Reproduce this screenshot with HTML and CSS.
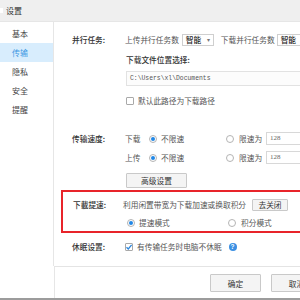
FILE: index.html
```html
<!DOCTYPE html>
<html lang="zh-CN">

<head>
    <meta charset="UTF-8">
    <meta name="viewport" content="width=device-width, initial-scale=1.0">
    <title>设置</title>
    <link rel="stylesheet" href="styles.css">
</head>

<body>
    <div class="window">
        <!-- Title bar -->
        <div class="titlebar"><span class="app-icon"></span>设置</div>

        <div class="main">
            <!-- Sidebar -->
            <ul class="sidebar">
                <li>基本</li>
                <li class="active">传输</li>
                <li>隐私</li>
                <li>安全</li>
                <li>提醒</li>
            </ul>

            <!-- Settings panel -->
            <div class="panel">
                <div class="row row-tasks">
                    <span class="label">并行任务:</span>
                    <span class="text">上传并行任务数</span>
                    <span class="select">智能<i>▾</i></span>
                    <span class="text text-down">下载并行任务数</span>
                    <span class="select select-down">智能<i>▾</i></span>
                </div>

                <div class="row indent row-path-title">
                    <span class="label-strong">下载文件位置选择:</span>
                </div>
                <div class="indent path-input">C:\Users\xl\Documents</div>
                <div class="row indent row-default">
                    <span class="checkbox"></span>
                    <span class="text">默认此路径为下载路径</span>
                </div>

                <div class="row row-speed">
                    <span class="label">传输速度:</span>
                    <span class="text dir">下载</span>
                    <span class="opt"><span class="radio on"></span><span class="text">不限速</span></span>
                    <span class="radio"></span><span class="text limit">限速为</span>
                    <span class="num-input">128</span>
                </div>
                <div class="row row-speed row-up">
                    <span class="label"></span>
                    <span class="text dir">上传</span>
                    <span class="opt"><span class="radio on"></span><span class="text">不限速</span></span>
                    <span class="radio"></span><span class="text limit">限速为</span>
                    <span class="num-input">128</span>
                </div>
                <div class="indent">
                    <button class="btn btn-advanced">高级设置</button>
                </div>

                <!-- Highlighted section -->
                <div class="boost-box">
                    <div class="row">
                        <span class="label boost-label">下載提速:</span>
                        <span class="text">利用闲置带宽为下载加速或换取积分</span>
                        <button class="btn btn-close">去关闭</button>
                    </div>
                    <div class="row boost-modes">
                        <span class="opt opt-wide"><span class="radio on"></span><span class="text">提速模式</span></span>
                        <span class="radio"></span><span class="text limit">积分模式</span>
                    </div>
                </div>

                <div class="row row-sleep">
                    <span class="label">休眠设置:</span>
                    <span class="checkbox checked">
                        <svg viewBox="0 0 8 8" width="8" height="8"><polyline points="1.5,4.2 3.3,6 6.6,1.8" fill="none" stroke="#2b86dd" stroke-width="1.3"/></svg>
                    </span>
                    <span class="text">有传输任务时电脑不休眠</span>
                    <span class="help">?</span>
                </div>
            </div>
        </div>

        <div class="footer">
            <button class="btn btn-footer">确定</button>
            <button class="btn btn-footer">取消</button>
        </div>
    </div>
</body>

</html>
```

FILE: styles.css
```css
* {
    margin: 0;
    padding: 0;
    box-sizing: border-box;
}

html,
body {
    width: 300px;
    height: 300px;
    overflow: hidden;
    background: #fff;
}

body {
    font-family: "Noto Sans CJK SC", "Noto Sans", sans-serif;
    font-size: 7.7px;
    line-height: 12px;
    color: #555;
}

.window {
    width: 340px;
    height: 300px;
    display: flex;
    flex-direction: column;
    border-bottom: 2px solid #9c9c9c;
}

/* Title bar */
.titlebar {
    height: 22px;
    background-color: #efefef;
    border-bottom: 1px solid #e6e6e6;
    display: flex;
    align-items: center;
    color: #333;
    font-size: 8px;
}

.app-icon {
    width: 3px;
    height: 5px;
    background: #fff;
    margin-right: 3px;
}

.main {
    display: flex;
    height: 244px;
}

/* Sidebar */
.sidebar {
    list-style: none;
    width: 54px;
    border-right: 1px solid #e6e6e6;
    padding-top: 2px;
}

.sidebar li {
    height: 19px;
    line-height: 19px;
    padding-left: 12px;
    color: #444;
    font-size: 8px;
}

.sidebar li.active {
    background-color: #d8edfd;
    color: #3b97e3;
}

/* Panel */
.panel {
    flex: 1;
    padding: 9px 0 0 18px;
}

.row {
    display: flex;
    align-items: center;
    height: 12px;
    white-space: nowrap;
}

.indent {
    margin-left: 54px;
}

.label {
    width: 53px;
    color: #333;
    font-weight: 500;
}

.label-strong {
    color: #333;
    font-weight: 500;
}

.text {
    color: #555;
}

.row-tasks {
    height: 18px;
}

.select {
    display: flex;
    align-items: center;
    justify-content: space-between;
    width: 32px;
    height: 12px;
    margin-left: 3px;
    padding: 0 3px;
    border: 1px solid #cfcfcf;
    background: #fff;
    color: #222;
    font-weight: 500;
}

.select i {
    font-style: normal;
    font-size: 6px;
    color: #777;
}

.text-down {
    margin-left: 7px;
}

.select-down {
    margin-left: 2px;
}

.row-path-title {
    margin-top: 5px;
}

.path-input {
    margin-top: 5px;
    height: 15px;
    border: 1px solid #e2e2e2;
    background: #fcfcfc;
    padding-left: 3px;
    font-family: "Liberation Mono", monospace;
    font-size: 6.4px;
    line-height: 13px;
    color: #555;
}

.row-default {
    margin-top: 9px;
}

.checkbox {
    display: inline-flex;
    width: 8px;
    height: 8px;
    border: 1px solid #a9a9a9;
    border-radius: 1px;
    background: #fff;
    margin-right: 4px;
    align-items: center;
    justify-content: center;
}

.checkbox svg {
    flex-shrink: 0;
}

/* Speed rows */
.row-speed {
    margin-top: 25px;
    height: 13px;
}

.row-up {
    margin-top: 6px;
}

.dir {
    width: 24px;
}

.opt {
    display: inline-flex;
    align-items: center;
    width: 77px;
}

.opt-wide {
    width: 101px;
}

.radio {
    display: inline-flex;
    align-items: center;
    justify-content: center;
    width: 8px;
    height: 8px;
    border: 1px solid #b4b4b4;
    border-radius: 50%;
    background: #fff;
    margin-right: 4px;
}

.radio.on::after {
    content: "";
    width: 4px;
    height: 4px;
    border-radius: 50%;
    background: #2087e6;
}

.limit {
    margin-left: 1px;
}

.num-input {
    margin-left: 4px;
    width: 50px;
    height: 13px;
    border: 1px solid #d8d8d8;
    padding-left: 3px;
    font-family: "Liberation Serif", serif;
    font-size: 7px;
    line-height: 11px;
    color: #666;
}

/* Buttons */
.btn {
    font-family: inherit;
    font-size: 7.7px;
    color: #333;
    background: #f4f4f4;
    border: 1px solid #c9c9c9;
    border-radius: 1px;
}

.btn-advanced {
    margin-top: 9px;
    width: 61px;
    height: 15px;
    display: block;
}

.btn-close {
    margin-left: 6px;
    width: 36px;
    height: 12px;
    line-height: 10px;
}

/* Highlighted section */
.boost-box {
    margin: 2px 0 0 -11px;
    height: 43px;
    border: 2px solid #e8242a;
    border-right: none;
    padding: 6px 0 0 10px;
}

.boost-box .row {
    height: 14px;
}

.boost-label {
    width: 50px;
}

.boost-box .boost-modes {
    margin-top: 5px;
    height: 12px;
    padding-left: 54px;
}

.row-sleep {
    margin-top: 8px;
}

.help {
    margin-left: 7px;
    width: 8px;
    height: 8px;
    border-radius: 50%;
    background: #3b8fe3;
    color: #fff;
    font-family: "Liberation Sans", sans-serif;
    font-size: 6.5px;
    font-weight: 700;
    line-height: 8px;
    text-align: center;
}

/* Footer */
.footer {
    flex: 1;
    border-top: 1px solid #e4e4e4;
    margin-left: 54px;
    border-left: 1px solid #e6e6e6;
    display: flex;
    justify-content: flex-end;
    gap: 10px;
    padding: 7px 18px 0 0;
}

.btn-footer {
    width: 51px;
    height: 18px;
}
```
